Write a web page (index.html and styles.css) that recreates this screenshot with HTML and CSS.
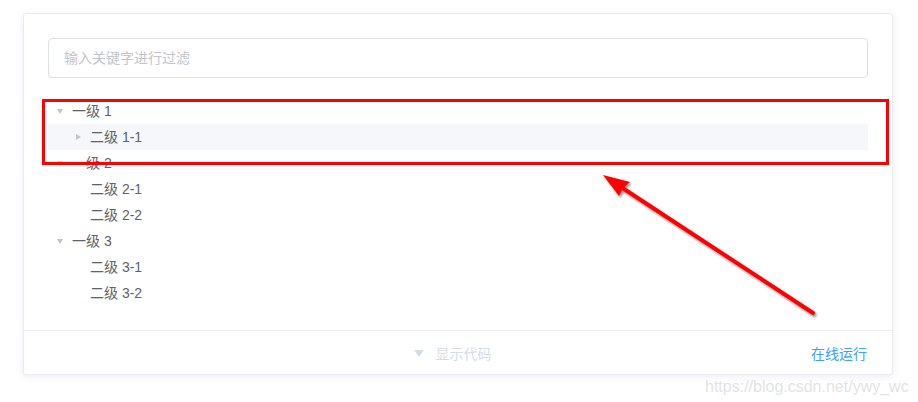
FILE: index.html
```html
<!DOCTYPE html>
<html lang="zh-CN">
<head>
<meta charset="utf-8">
<title>Tree</title>
<link rel="stylesheet" href="styles.css">
</head>
<body>
<div class="page">
  <div class="demo-block">
    <div class="source">
      <div class="input-wrap"><input class="input" type="text" placeholder="输入关键字进行过滤"></div>
      <div class="tree">
        <div class="node"><span class="caret open"></span><span class="label">一级 1</span></div>
        <div class="node lvl2 current"><span class="caret"></span><span class="label">二级 1-1</span></div>
        <div class="node"><span class="caret open"></span><span class="label">一级 2</span></div>
        <div class="node lvl2"><span class="caret leaf"></span><span class="label">二级 2-1</span></div>
        <div class="node lvl2"><span class="caret leaf"></span><span class="label">二级 2-2</span></div>
        <div class="node"><span class="caret open"></span><span class="label">一级 3</span></div>
        <div class="node lvl2"><span class="caret leaf"></span><span class="label">二级 3-1</span></div>
        <div class="node lvl2"><span class="caret leaf"></span><span class="label">二级 3-2</span></div>
      </div>
    </div>
    <div class="control">
      <div class="toggle"><span class="toggle-caret"></span><span>显示代码</span></div>
      <a class="run">在线运行</a>
    </div>
  </div>
  <div class="watermark">https://blog.csdn.net/ywy_wc</div>
  <div class="highlight-box"></div>
  <svg class="arrow" width="918" height="402" viewBox="0 0 918 402">
    <defs>
      <filter id="sh" x="-20%" y="-20%" width="140%" height="140%">
        <feDropShadow dx="1.5" dy="2" stdDeviation="1.2" flood-color="#000" flood-opacity="0.45"/>
      </filter>
    </defs>
    <g filter="url(#sh)" fill="#ff0000" stroke="none">
      <line x1="813" y1="313" x2="621" y2="187" stroke="#ff0000" stroke-width="4" stroke-linecap="round"/>
      <polygon points="603,175 630,182 623,188 619,196"/>
    </g>
  </svg>
</div>
</body>
</html>
```
FILE: styles.css
```css
* { box-sizing: border-box; }
html, body { margin: 0; padding: 0; background: #fff; }
body {
  font-family: "Liberation Sans", "Noto Sans CJK SC", sans-serif;
  font-size: 14px;
  color: #606266;
}
.page {
  position: relative;
  width: 918px;
  height: 402px;
  padding: 13px 0 0 23px;
}
.demo-block {
  width: 870px;
  border: 1px solid #ebebeb;
  border-radius: 3px;
  box-shadow: 0 2px 8px rgba(232, 237, 250, 0.6), 0 1px 4px rgba(232, 237, 250, 0.5);
  background: #fff;
}
.source {
  padding: 24px;
}
.input {
  display: block;
  width: 100%;
  height: 40px;
  border: 1px solid #dcdfe6;
  border-radius: 4px;
  padding: 0 15px;
  font-family: inherit;
  font-size: 14px;
  color: #606266;
  outline: none;
  background: #fff;
}
.input::placeholder { color: #c0c4cc; }
.tree {
  margin-top: 20px;
}
.node {
  height: 26px;
  display: flex;
  align-items: center;
  color: #606266;
  font-size: 14px;
}
.node.lvl2 { padding-left: 18px; }
.node.current { background: #f5f7fa; }
.caret {
  width: 24px;
  height: 26px;
  display: flex;
  align-items: center;
  justify-content: center;
}
.caret::before {
  content: "";
  width: 0;
  height: 0;
  border-top: 3.5px solid transparent;
  border-bottom: 3.5px solid transparent;
  border-left: 5px solid #c0c4cc;
}
.caret.open::before {
  border-left: 3.5px solid transparent;
  border-right: 3.5px solid transparent;
  border-top: 5px solid #c0c4cc;
  border-bottom: 0;
}
.caret.leaf::before { border-color: transparent; }
.label { line-height: 26px; }
.control {
  height: 44px;
  border-top: 1px solid #eaeefb;
  display: flex;
  align-items: center;
  position: relative;
  padding: 0 25px 0 0;
}
.toggle {
  flex: 1;
  display: flex;
  align-items: center;
  justify-content: center;
  color: #d3dce6;
  font-size: 14px;
  gap: 12px;
  padding-left: 70px;
}
.toggle-caret {
  width: 0;
  height: 0;
  border-left: 5px solid transparent;
  border-right: 5px solid transparent;
  border-top: 7px solid #d3dce6;
  margin-top: 1px;
}
.run {
  color: #409eff;
  font-size: 14px;
  text-decoration: none;
}
.watermark {
  margin: 3px 0 0 682px;
  font-size: 16px;
  color: #e3e3e3;
  letter-spacing: 0;
}
.highlight-box {
  position: absolute;
  left: 42px;
  top: 99px;
  width: 847px;
  height: 66px;
  border: 3px solid #ff0000;
}
.arrow {
  position: absolute;
  left: 0;
  top: 0;
  pointer-events: none;
}
```
